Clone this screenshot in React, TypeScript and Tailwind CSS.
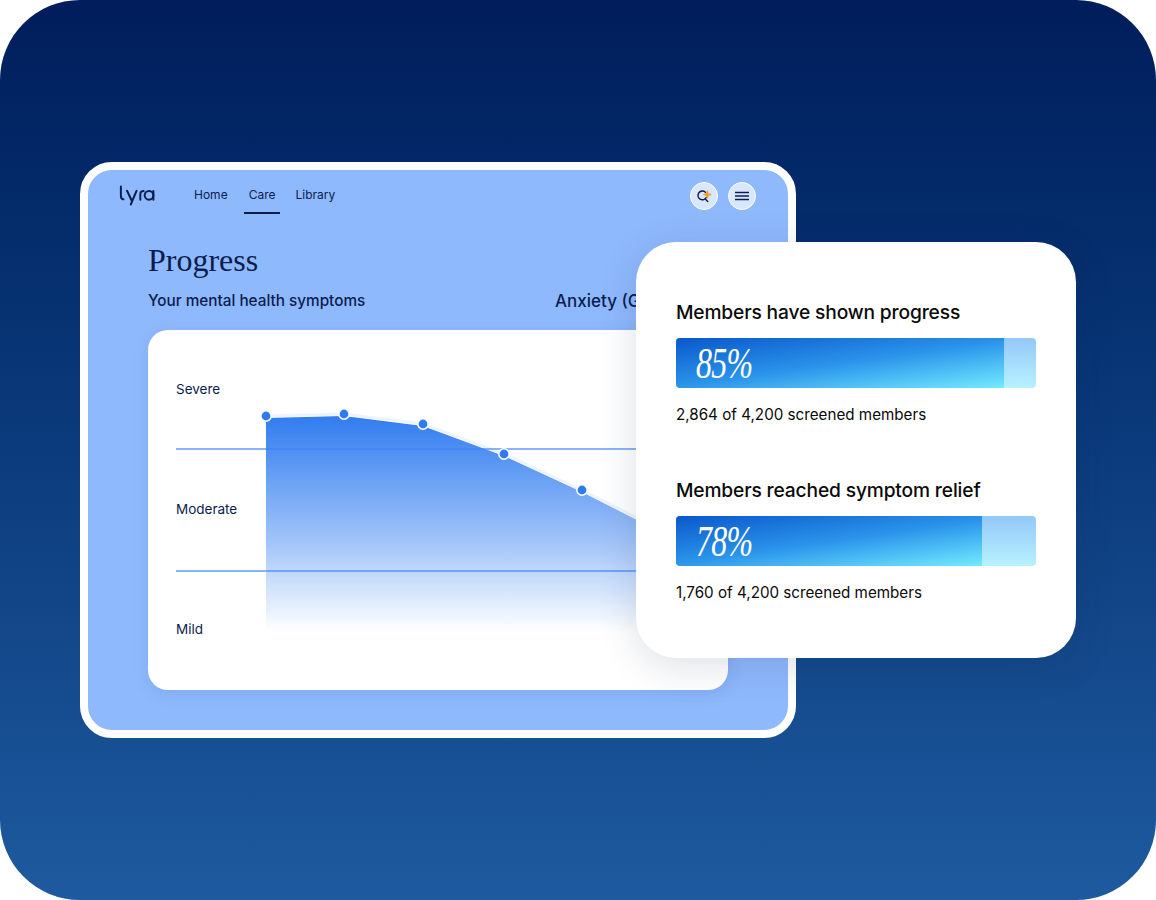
const points = [
  [266, 416],
  [344, 414],
  [423, 424],
  [504, 454],
  [582, 490],
]

const sans = "font-['Inter',sans-serif]"

const LyraLogo = () => (
  <svg width="36" height="21" viewBox="0 0 38 22" fill="none" stroke="#0b1c4f" strokeWidth="2.1" strokeLinecap="round" role="img" aria-label="lyra">
    <path d="M2 1.5V11.5C2 13.6 2.8 14.8 4.6 15" />
    <path d="M8.5 6L13.5 16.5M18.5 6L12.4 20.5" />
    <path d="M22.5 15.5V9.6C22.5 7.4 23.8 6.2 26 6.2" />
    <circle cx="31.7" cy="10.8" r="4.6" />
    <path d="M36.3 6.2V15.5" />
  </svg>
)

const ChartArea = () => (
  <svg className="absolute top-0 left-0" width="580" height="360" viewBox="148 330 580 360" fill="none">
    <defs>
      <linearGradient id="area" x1="0" y1="414" x2="0" y2="632" gradientUnits="userSpaceOnUse">
        <stop offset="0" stopColor="#2f7bf0" />
        <stop offset="0.6" stopColor="#a4c6f9" />
        <stop offset="1" stopColor="#ffffff" />
      </linearGradient>
    </defs>
    <path d="M266 418L344 416L423 426L504 456L582 492L700 552V632H266Z" fill="url(#area)" />
    <path d="M266 416L344 414L423 424L504 454L582 490L700 550" stroke="#eef4fe" strokeWidth="3" />
    <path d="M176 449H700M176 571H700" stroke="#3b82f6" strokeOpacity="0.6" strokeWidth="2" />
    {points.map(([x, y]) => (
      <circle key={x} cx={x} cy={y} r="5.2" fill="#2f7bf0" stroke="#ffffff" strokeWidth="1.6" />
    ))}
  </svg>
)

const ProgressBar = ({ label, value, width, count }: { label: string; value: string; width: string; count: string }) => (
  <div>
    <h3 className={`text-[19.2px] leading-[28px] font-medium tracking-[-0.15px] text-[#0a0a0a] ${sans}`}>{label}</h3>
    <div className="mt-[12px] h-[50px] w-[360px] overflow-hidden rounded-[4px] bg-gradient-to-b from-[#93c8f8] to-[#b8f1ff]">
      <div className={`flex h-full items-center bg-[linear-gradient(172deg,#0a58cc_0%,#2a93ea_50%,#72ebff_100%)] pl-[20px] ${width}`}>
        <span className="inline-block origin-left scale-x-[0.71] font-['Liberation_Serif',serif] text-[45px] leading-none tracking-[-1px] text-white italic">{value}</span>
      </div>
    </div>
    <p className={`mt-[16px] text-[15.2px] leading-[22px] text-[#0a0a0a] ${sans}`}>{count}</p>
  </div>
)

export default function App() {
  return (
    <div className="bg-white">
      <div className="h-[900px] w-[1156px] overflow-hidden rounded-[80px] bg-gradient-to-b from-[#011d5b] to-[#1e5a9f] pt-[162px] pl-[80px]">
        <div className="relative h-[576px] w-[716px] rounded-[32px] border-[8px] border-white bg-[#8fb9fd]">
          <header className={`flex h-[44px] items-stretch pr-[32px] pl-[31px] text-[#0b1c4f] ${sans}`}>
            <div className="flex items-center pt-[6px]">
              <LyraLogo />
            </div>
            <nav className="ml-[39px] flex items-stretch text-[12px]">
              <span className="flex items-center pt-[5px]">Home</span>
              <span className="ml-[16px] flex items-center border-b-2 border-[#0b1c4f] px-[5px] pt-[7px]">Care</span>
              <span className="ml-[15px] flex items-center pt-[5px]">Library</span>
            </nav>
            <div className="ml-auto flex items-center gap-[10px] pt-[8px]">
              <button className="flex h-[28px] w-[28px] items-center justify-center rounded-full border border-white bg-[#d9e7fd]">
                <svg width="18" height="18" viewBox="0 0 18 18" fill="none">
                  <path d="M10.4 5.2A4.4 4.4 0 1 0 11.4 10.2" stroke="#0b1c4f" strokeWidth="1.4" strokeLinecap="round" />
                  <path d="M10.2 12L12.8 14.4" stroke="#0b1c4f" strokeWidth="1.4" strokeLinecap="round" />
                  <path d="M12.3 3.6L13.4 6.5L16.3 7.6L13.4 8.7L12.3 11.6L11.2 8.7L8.3 7.6L11.2 6.5Z" fill="#f59a34" stroke="#f59a34" strokeWidth="0.8" strokeLinejoin="round" />
                </svg>
              </button>
              <button className="flex h-[28px] w-[28px] items-center justify-center rounded-full border border-white bg-[#d9e7fd]">
                <svg width="14" height="10" viewBox="0 0 14 10" fill="none" stroke="#0b1c4f" strokeWidth="1.5">
                  <path d="M0 1.5H14M0 5H14M0 8.5H14" />
                </svg>
              </button>
            </div>
          </header>

          <main className="px-[60px]">
            <h1 className="mt-[27px] font-['Liberation_Serif',serif] text-[32px] leading-[38px] text-[#0b1c4f]">Progress</h1>
            <div className={`mt-[10px] flex items-center text-[#0b1c4f] ${sans}`}>
              <span className="w-[407px] text-[15.3px] leading-[24px] font-medium">Your mental health symptoms</span>
              <span className="text-[17px] leading-[24px] font-medium">Anxiety (GAD-7)</span>
            </div>

            <div className="relative mt-[17px] h-[360px] w-[580px] rounded-[20px] bg-white shadow-[0_4px_16px_rgba(30,70,140,0.12)]">
              <ChartArea />
              <div className={`relative flex flex-col pt-[50px] pl-[28px] text-[13.5px] leading-[18px] text-[#0b1c4f] ${sans}`}>
                <span>Severe</span>
                <span className="mt-[102px]">Moderate</span>
                <span className="mt-[102px]">Mild</span>
              </div>
            </div>
          </main>

          <aside className="absolute top-[72px] left-[548px] flex h-[416px] w-[440px] flex-col gap-[50px] rounded-[40px] bg-white p-[40px] pt-[56px] shadow-[0_8px_40px_rgba(15,35,70,0.14)]">
            <ProgressBar label="Members have shown progress" value="85%" width="w-[328px]" count="2,864 of 4,200 screened members" />
            <ProgressBar label="Members reached symptom relief" value="78%" width="w-[306px]" count="1,760 of 4,200 screened members" />
          </aside>
        </div>
      </div>
    </div>
  )
}
